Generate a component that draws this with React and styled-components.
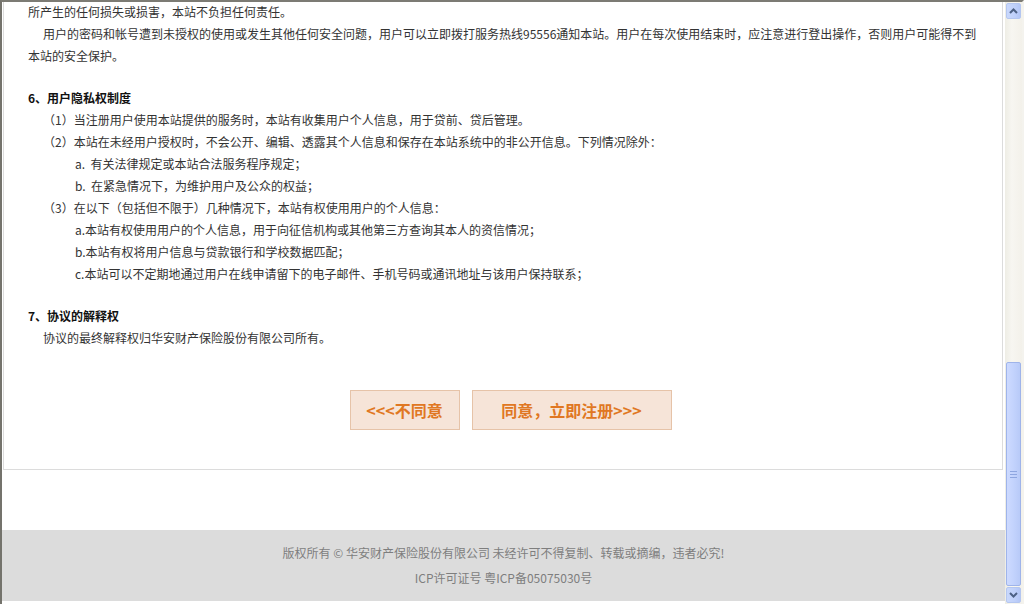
import React from 'react'
import styled, { createGlobalStyle } from 'styled-components'

const GlobalStyle = createGlobalStyle`
  html, body {
    margin: 0;
    padding: 0;
    overflow: hidden;
    background: #fff;
  }
  body {
    font-family: "Noto Sans CJK SC", "DejaVu Sans", sans-serif;
    font-size: 12px;
    color: #333;
  }
`

const Window = styled.div`
  width: 1024px;
  height: 604px;
  box-sizing: border-box;
  border-top: 2px solid #7c7b74;
  border-left: 2px solid #74736c;
  border-right: 2px solid #f4f3ee;
  display: flex;
  background: #fff;
`

const Viewport = styled.div`
  flex: 1;
  display: flex;
  flex-direction: column;
  overflow: hidden;
`

const Panel = styled.div`
  margin: 0 2px 0 1px;
  border: 1px solid #dcdcdc;
  border-top: none;
  padding: 0 24px 39px 24px;
  background: #fff;
`

const Text = styled.div`
  margin-top: -1px;
`

const Section = styled.div`
  & + & {
    margin-top: 20px;
  }
`

const Heading = styled.p`
  margin: 0;
  line-height: 22px;
  font-weight: bold;
  color: #111;
`

const Line = styled.p`
  margin: 0;
  line-height: 22px;
  white-space: nowrap;
  padding-left: ${p => (p.$level === 2 ? 47 : p.$level === 1 ? 15 : 0)}px;
`

const Actions = styled.div`
  display: flex;
  justify-content: center;
  gap: 12px;
  margin-top: 41px;
  padding-left: 15px;
`

const Button = styled.button`
  width: ${p => p.$w}px;
  height: 40px;
  box-sizing: border-box;
  background: #f6e4d8;
  border: 1px solid #e6c3a8;
  color: #e07722;
  font-family: "Noto Sans CJK SC", sans-serif;
  font-size: 16px;
  font-weight: bold;
  padding: 0;
  cursor: pointer;
`

const Gap = styled.div`
  height: 60px;
`

const Footer = styled.div`
  height: 71px;
  box-sizing: border-box;
  padding-top: 10px;
  background: #dcdcdc;
  text-align: center;
  color: #7e7e7e;
  font-size: 12px;
  line-height: 25px;
`

const ScrollBar = styled.div`
  width: 17px;
  display: flex;
  flex-direction: column;
  background: linear-gradient(to right, #eeede5, #f7f6f1 40%, #f3f1ea);
  padding: 0 0 1px 0;
  box-sizing: border-box;
`

const ArrowButton = styled.div`
  height: 16px;
  margin: 1px 1px 0 1px;
  border: 1px solid #b4c6f0;
  border-radius: 2px;
  box-sizing: border-box;
  background: linear-gradient(to right, #c9d8fc, #bfd0fa 60%, #b3c6f6);
  display: flex;
  align-items: center;
  justify-content: center;
`

const Track = styled.div`
  flex: 1;
  display: flex;
  flex-direction: column;
  justify-content: flex-end;
`

const Thumb = styled.div`
  height: 224px;
  margin: 0 1px;
  border: 1px solid #9fb4ea;
  border-radius: 2px;
  box-sizing: border-box;
  background: linear-gradient(to right, #cddaff, #c3d3fd 50%, #b8caf8);
  display: flex;
  align-items: center;
  justify-content: center;
`

const Chevron = ({ up }) => (
  <svg width="9" height="6" viewBox="0 0 9 6">
    <path
      d={up ? 'M1 5 L4.5 1.5 L8 5' : 'M1 1 L4.5 4.5 L8 1'}
      fill="none"
      stroke="#4d6185"
      strokeWidth="2"
    />
  </svg>
)

const Grip = () => (
  <svg width="7" height="7" viewBox="0 0 7 7">
    <path d="M0 0.5H7M0 3.5H7M0 6.5H7" stroke="#8ea6e0" strokeWidth="1" />
  </svg>
)

function App() {
  return (
    <>
      <GlobalStyle />
      <Window>
        <Viewport>
          <Panel>
            <Text>
              <Section>
                <Line>所产生的任何损失或损害，本站不负担任何责任。</Line>
                <Line $level={1}>
                  用户的密码和帐号遭到未授权的使用或发生其他任何安全问题，用户可以立即拨打服务热线95556通知本站。用户在每次使用结束时，应注意进行登出操作，否则用户可能得不到
                </Line>
                <Line>本站的安全保护。</Line>
              </Section>
              <Section>
                <Heading>6、用户隐私权制度</Heading>
                <Line $level={1}>（1）当注册用户使用本站提供的服务时，本站有收集用户个人信息，用于贷前、贷后管理。</Line>
                <Line $level={1}>（2）本站在未经用户授权时，不会公开、编辑、透露其个人信息和保存在本站系统中的非公开信息。下列情况除外：</Line>
                <Line $level={2}>a.&nbsp; 有关法律规定或本站合法服务程序规定；</Line>
                <Line $level={2}>b.&nbsp; 在紧急情况下，为维护用户及公众的权益；</Line>
                <Line $level={1}>（3）在以下（包括但不限于）几种情况下，本站有权使用用户的个人信息：</Line>
                <Line $level={2}>a.本站有权使用用户的个人信息，用于向征信机构或其他第三方查询其本人的资信情况；</Line>
                <Line $level={2}>b.本站有权将用户信息与贷款银行和学校数据匹配；</Line>
                <Line $level={2}>c.本站可以不定期地通过用户在线申请留下的电子邮件、手机号码或通讯地址与该用户保持联系；</Line>
              </Section>
              <Section>
                <Heading>7、协议的解释权</Heading>
                <Line $level={1}>协议的最终解释权归华安财产保险股份有限公司所有。</Line>
              </Section>
            </Text>
            <Actions>
              <Button $w={110}>&lt;&lt;&lt;不同意</Button>
              <Button $w={200}>同意，立即注册&gt;&gt;&gt;</Button>
            </Actions>
          </Panel>
          <Gap />
          <Footer>
            <div>版权所有 © 华安财产保险股份有限公司 未经许可不得复制、转载或摘编，违者必究!</div>
            <div>ICP许可证号 粤ICP备05075030号</div>
          </Footer>
        </Viewport>
        <ScrollBar>
          <ArrowButton>
            <Chevron up />
          </ArrowButton>
          <Track>
            <Thumb>
              <Grip />
            </Thumb>
          </Track>
          <ArrowButton>
            <Chevron />
          </ArrowButton>
        </ScrollBar>
      </Window>
    </>
  )
}

export default App
